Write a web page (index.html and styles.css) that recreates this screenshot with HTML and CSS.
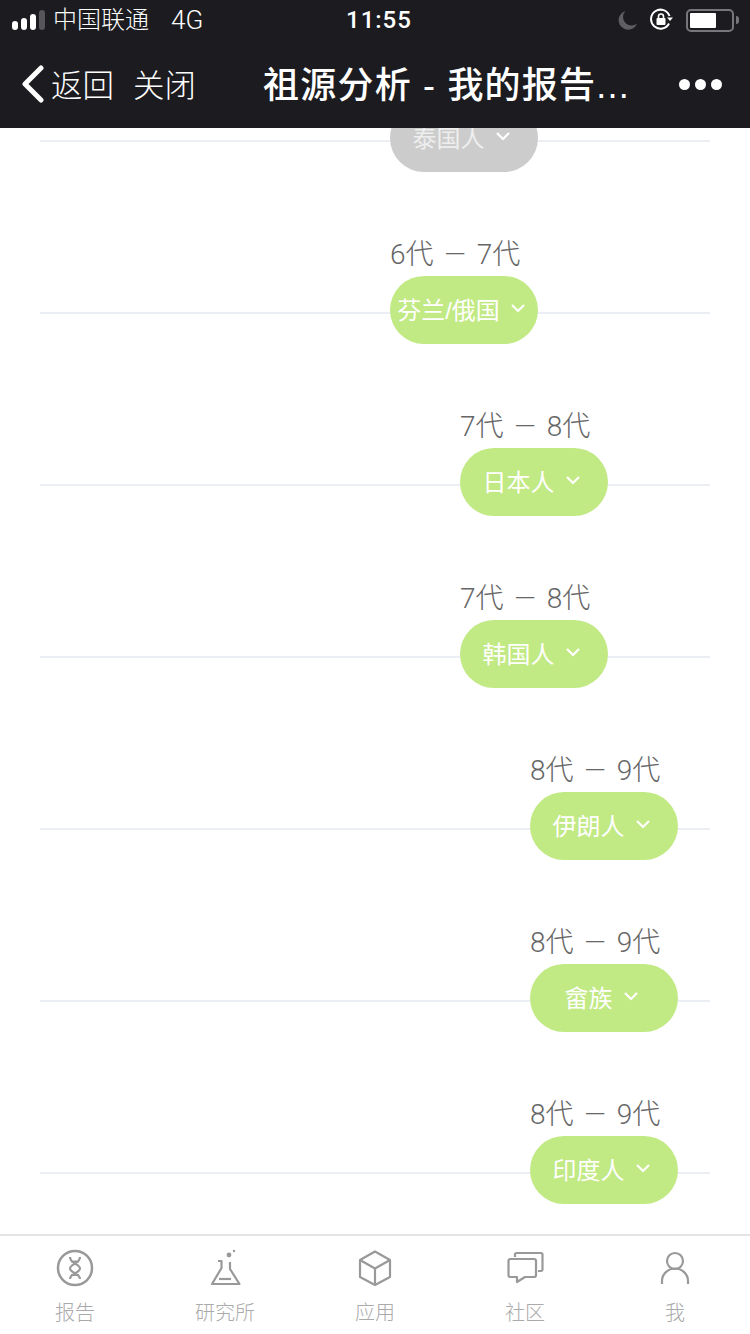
FILE: index.html
```html
<!DOCTYPE html>
<html lang="zh-CN">
<head>
    <meta charset="UTF-8">
    <title>祖源分析 - 我的报告</title>
    <link rel="stylesheet" href="styles.css">
</head>
<body>
    <header class="top">
        <div class="status">
            <div class="signal"><i></i><i></i><i></i><i class="off"></i></div>
            <span class="carrier">中国联通</span>
            <span class="net">4G</span>
            <span class="time">11:55</span>
            <div class="status-right">
                <svg class="moon" width="20" height="20" viewBox="0 0 20 20"><path d="M7.5 1A9.5 9.5 0 1 0 19 13.5 8.5 8.5 0 0 1 7.5 1Z" fill="#5e5e63"/></svg>
                <svg class="lock" width="24" height="24" viewBox="0 0 24 24" fill="none" stroke="#fff" stroke-width="2"><path d="M19 15.5A9.5 9.5 0 1 1 19.5 8"/><path d="M17 9.5h6l-3 3.4Z" fill="#fff" stroke="none"/><rect x="6.5" y="10" width="9" height="7" rx="1" fill="#fff" stroke="none"/><path d="M8.5 10V8.500a2.500 2.500 0 0 1 5 0V10" stroke-width="1.600"/></svg>
                <div class="battery"><div class="battery-fill"></div></div>
                <div class="battery-nub"></div>
            </div>
        </div>
        <nav class="nav">
            <svg class="back" width="24" height="38" viewBox="0 0 24 38" fill="none" stroke="#fff" stroke-width="5" stroke-linecap="round" stroke-linejoin="round"><path d="M20 3 4 19l16 16"/></svg>
            <span class="nav-link">返回</span>
            <span class="nav-link close">关闭</span>
            <span class="title">祖源分析 - 我的报告...</span>
            <div class="more"><i></i><i></i><i></i></div>
        </nav>
    </header>

    <main class="timeline">
        <div class="row col-5">
            <div class="gen"></div>
            <div class="pill grey">泰国人 <svg class="chev" width="16" height="10" viewBox="0 0 16 10"><path d="M2 2l6 6 6-6"/></svg></div>
        </div>
        <div class="row col-5">
            <div class="gen">6代 — 7代</div>
            <div class="pill">芬兰/俄国 <svg class="chev" width="16" height="10" viewBox="0 0 16 10"><path d="M2 2l6 6 6-6"/></svg></div>
        </div>
        <div class="row col-6">
            <div class="gen">7代 — 8代</div>
            <div class="pill">日本人 <svg class="chev" width="16" height="10" viewBox="0 0 16 10"><path d="M2 2l6 6 6-6"/></svg></div>
        </div>
        <div class="row col-6">
            <div class="gen">7代 — 8代</div>
            <div class="pill">韩国人 <svg class="chev" width="16" height="10" viewBox="0 0 16 10"><path d="M2 2l6 6 6-6"/></svg></div>
        </div>
        <div class="row col-7">
            <div class="gen">8代 — 9代</div>
            <div class="pill">伊朗人 <svg class="chev" width="16" height="10" viewBox="0 0 16 10"><path d="M2 2l6 6 6-6"/></svg></div>
        </div>
        <div class="row col-7">
            <div class="gen">8代 — 9代</div>
            <div class="pill">畲族 <svg class="chev" width="16" height="10" viewBox="0 0 16 10"><path d="M2 2l6 6 6-6"/></svg></div>
        </div>
        <div class="row col-7">
            <div class="gen">8代 — 9代</div>
            <div class="pill">印度人 <svg class="chev" width="16" height="10" viewBox="0 0 16 10"><path d="M2 2l6 6 6-6"/></svg></div>
        </div>
    </main>

    <footer class="tabs">
        <div class="tab">
            <svg width="38" height="38" viewBox="0 0 38 38" fill="none" stroke="#999" stroke-width="2.500"><circle cx="19" cy="19" r="17"/><path d="M14 8c0 7 10 7 10 11.500S14 24 14 30M24 8c0 7-10 7-10 11.500S24 24 24 30M15 12.500h8M15 26h8" stroke-width="2.200"/></svg>
            <span>报告</span>
        </div>
        <div class="tab">
            <svg width="38" height="38" viewBox="0 0 38 38" fill="none" stroke="#999" stroke-width="2.200" stroke-linejoin="round"><path d="M12 12h3.500v7L6 35h27.500L24 20v-7"/><path d="M13 30h12"/><circle cx="23" cy="6" r="2.400" fill="#999" stroke="none"/><circle cx="28" cy="2" r="1.200" fill="#999" stroke="none"/></svg>
            <span>研究所</span>
        </div>
        <div class="tab">
            <svg width="38" height="38" viewBox="0 0 38 38" fill="none" stroke="#999" stroke-width="2.200" stroke-linejoin="round"><path d="M19 2.500 34 11v17L19 36 4 28V11Z"/><path d="M4 11l15 8.500L34 11M19 19.500V36"/></svg>
            <span>应用</span>
        </div>
        <div class="tab">
            <svg width="38" height="38" viewBox="0 0 38 38" fill="none" stroke="#999" stroke-width="2.200" stroke-linejoin="round"><path d="M9 8V5.500Q9 4 10.500 4H35q1.500 0 1.500 1.500v15q0 1.500-1.500 1.500h-3"/><path d="M4.500 10H28q2 0 2 2v14q0 2-2 2H19l-8 5v-5H4.500q-2 0-2-2V12q0-2 2-2Z"/></svg>
            <span>社区</span>
        </div>
        <div class="tab">
            <svg width="38" height="38" viewBox="0 0 38 38" fill="none" stroke="#999" stroke-width="2.200"><circle cx="19" cy="12" r="8"/><path d="M6 35v-3c0-7 6-12.500 13-12.500S32 25 32 32v3"/></svg>
            <span>我</span>
        </div>
    </footer>
</body>
</html>
```

FILE: styles.css
```css
* {
    box-sizing: border-box;
}

body {
    margin: 0;
    height: 1334px;
    display: flex;
    flex-direction: column;
    overflow: hidden;
    background: #fff;
    font-family: "Liberation Sans", "Noto Sans CJK SC", sans-serif;
}

.top {
    background: #1c1c20;
    color: #fff;
    flex: none;
    position: relative;
    z-index: 2;
}

.status {
    height: 40px;
    display: flex;
    align-items: center;
    padding-left: 12px;
    font-size: 24px;
    font-weight: 300;
}

.signal {
    display: flex;
    align-items: flex-end;
    gap: 3px;
    height: 20px;
    margin-right: 8px;
}

.signal i {
    display: block;
    width: 6px;
    border-radius: 3px;
    background: #fff;
}

.signal i:nth-child(1) { height: 9px; }
.signal i:nth-child(2) { height: 12px; }
.signal i:nth-child(3) { height: 16px; }
.signal i:nth-child(4) { height: 20px; }
.signal i.off { background: #55555a; }

.carrier {
    width: 118px;
    line-height: 36px;
}

.net {
    width: 175px;
    font-family: Roboto, sans-serif;
    font-size: 26px;
    font-weight: 300;
}

.time {
    font-family: Roboto, sans-serif;
    font-size: 24px;
    font-weight: 500;
    letter-spacing: 1px;
}

.status-right {
    margin-left: auto;
    display: flex;
    align-items: center;
    padding-right: 11px;
}

.moon {
    margin-right: 12px;
}

.lock {
    margin-right: 12px;
}

.battery {
    width: 48px;
    height: 23px;
    border: 2px solid #77777b;
    border-radius: 5px;
    padding: 2px;
}

.battery-fill {
    width: 26px;
    height: 15px;
    background: #fff;
    border-radius: 1px;
}

.battery-nub {
    width: 3px;
    height: 8px;
    margin-left: 2px;
    background: #77777b;
    border-radius: 0 3px 3px 0;
}

.nav {
    height: 88px;
    display: flex;
    align-items: center;
    padding: 0 28px 0 21px;
}

.back {
    margin-right: 6px;
}

.nav-link {
    font-size: 31.5px;
    font-weight: 300;
    padding-bottom: 2px;
}

.close {
    margin-left: 19px;
}

.title {
    margin-left: 67px;
    padding-bottom: 4px;
    font-size: 36px;
    font-weight: 500;
    letter-spacing: 1.2px;
    white-space: nowrap;
}

.more {
    display: flex;
    gap: 5px;
    margin-left: auto;
}

.more i {
    display: block;
    width: 11px;
    height: 11px;
    border-radius: 50%;
    background: #fff;
}

.timeline {
    flex: 1;
    min-height: 0;
    overflow: hidden;
}

.row {
    height: 172px;
    margin: 0 40px;
    padding-top: 24px;
    background: linear-gradient(#ebeef2, #ebeef2) 0 100px / 100% 2px no-repeat;
}

.row:first-child {
    margin-top: -88px;
}

.col-5 { padding-left: 350px; }
.col-6 { padding-left: 420px; }
.col-7 { padding-left: 490px; }

.gen {
    height: 40px;
    line-height: 38px;
    font-family: Roboto, "Noto Sans CJK SC", sans-serif;
    font-size: 28px;
    font-weight: 300;
    word-spacing: 4px;
    color: #666;
    white-space: nowrap;
}

.pill {
    width: 148px;
    height: 68px;
    padding-right: 5px;
    padding-bottom: 4px;
    border-radius: 34px;
    background: #c1e984;
    color: #fff;
    font-size: 24px;
    display: flex;
    align-items: center;
    justify-content: center;
    gap: 10px;
    white-space: nowrap;
}

.pill.grey {
    background: #ccc;
    color: #eee;
}

.chev {
    fill: none;
    stroke: #fff;
    stroke-width: 2.200;
}

.tabs {
    flex: none;
    height: 100px;
    border-top: 2px solid #e3e4e6;
    display: grid;
    grid-template-columns: repeat(5, 1fr);
    background: #fff;
}

.tab {
    display: flex;
    flex-direction: column;
    align-items: center;
    padding-top: 13px;
    gap: 12px;
    color: #aaa;
    font-size: 20px;
    font-weight: 300;
}

.tab span {
    line-height: 28px;
}
```
